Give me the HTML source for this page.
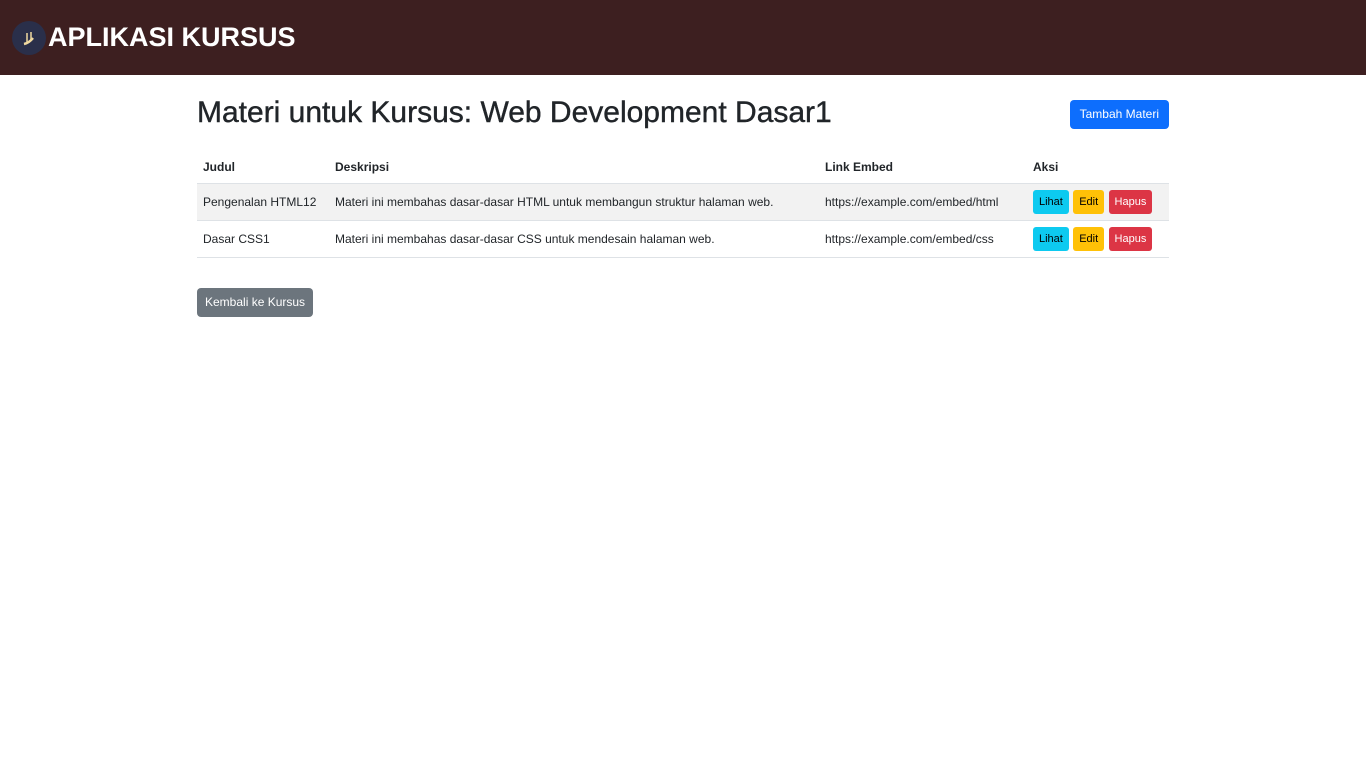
<!DOCTYPE html>
<html><head><meta charset="utf-8"><style>
*{box-sizing:border-box;margin:0;padding:0}
body{width:1366px;height:768px;background:#fff;font-family:"Liberation Sans",sans-serif;color:#212529;overflow:hidden}
.hd{height:75px;background:#3d1f20;display:flex;align-items:center;padding-left:12px}
.logo{width:34px;height:34px;border-radius:50%;background:#2a2f4a;margin-right:2px;display:flex;align-items:center;justify-content:center}
.hd h1{color:#fff;font-size:27px;font-weight:bold;letter-spacing:0px}
.wrap{position:absolute;left:197px;top:96px;width:972px}
h2{font-size:30px;font-weight:normal;color:#212529;margin-top:0;-webkit-text-stroke:0.4px #212529}
.btn{display:inline-block;border-radius:4px;font-size:12px;color:#fff}
.add{position:absolute;right:0;top:4px;background:#0d6efd;padding:7px 10px;height:29px}
table{position:absolute;left:0;top:56px;width:100%;border-collapse:collapse;font-size:12px}
th{text-align:left;font-weight:bold;padding:0 6px;height:31px;border-bottom:1px solid #dee2e6}
td{padding:0 6px;height:37px;border-bottom:1px solid #dee2e6}
tr.s td{background:#f2f2f2}
.b{display:inline-block;font-size:11px;padding:5px 6px;border-radius:3px;margin-right:1px;height:24px;line-height:14px}
.l{background:#0dcaf0;color:#000}.e{background:#ffc107;color:#000}.h{background:#dc3545;color:#fff}
.back{position:absolute;left:0;top:192px;background:#6c757d;padding:7px 8px;height:29px}
</style></head><body>
<div class="hd"><div class="logo"><svg width="20" height="20" viewBox="0 0 20 20"><path d="M5 16 Q10 15 14 10" stroke="#f0d9a0" stroke-width="2.5" fill="none"/><path d="M8 5v9M12 4v9" stroke="#f0d9a0" stroke-width="1.5"/></svg></div><h1>APLIKASI KURSUS</h1></div>
<div class="wrap">
<h2>Materi untuk Kursus: Web Development Dasar1</h2>
<span class="btn add">Tambah Materi</span>
<table>
<tr><th style="width:132px">Judul</th><th style="width:490px">Deskripsi</th><th style="width:208px">Link Embed</th><th>Aksi</th></tr>
<tr class="s"><td>Pengenalan HTML12</td><td>Materi ini membahas dasar-dasar HTML untuk membangun struktur halaman web.</td><td>https://example.com/embed/html</td><td><span class="b l">Lihat</span> <span class="b e">Edit</span> <span class="b h">Hapus</span></td></tr>
<tr><td>Dasar CSS1</td><td>Materi ini membahas dasar-dasar CSS untuk mendesain halaman web.</td><td>https://example.com/embed/css</td><td><span class="b l">Lihat</span> <span class="b e">Edit</span> <span class="b h">Hapus</span></td></tr>
</table>
<span class="btn back">Kembali ke Kursus</span>
</div>
</body></html>
